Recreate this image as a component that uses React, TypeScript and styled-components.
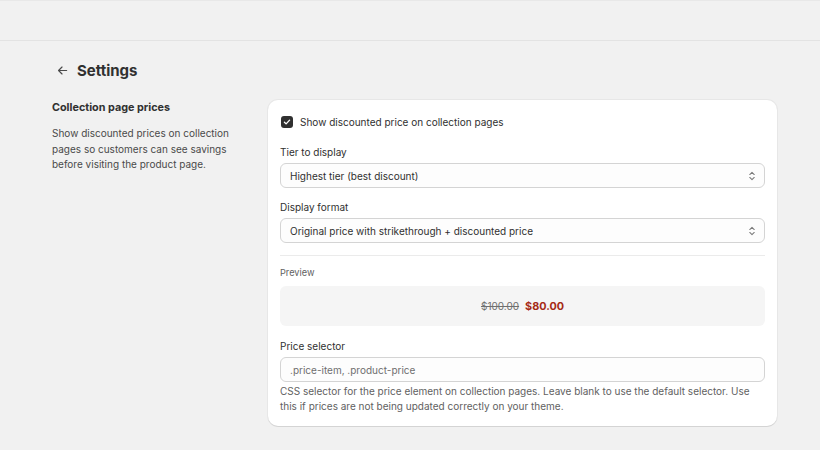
import React, { useState } from "react";
import styled, { createGlobalStyle } from "styled-components";

const GlobalStyle = createGlobalStyle`
  html, body {
    margin: 0;
    padding: 0;
    background: #f1f1f1;
  }
  body {
    font-family: Inter, "Noto Sans", "Liberation Sans", sans-serif;
    color: #303030;
    -webkit-font-smoothing: antialiased;
  }
`;

const ArrowLeft = () => (
  <svg width="11" height="11" viewBox="0 0 12 12" fill="none">
    <path d="M10.5 6H1.8M5.5 2.2L1.7 6l3.8 3.8" stroke="#4a4a4a" strokeWidth="1.3" strokeLinecap="round" strokeLinejoin="round" />
  </svg>
);

const Chevrons = () => (
  <svg width="8" height="12" viewBox="0 0 10 14" fill="none">
    <path d="M2.2 5.2L5 2.4l2.8 2.8M2.2 8.8L5 11.6l2.8-2.8" stroke="#7a7a7a" strokeWidth="1.3" strokeLinecap="round" strokeLinejoin="round" />
  </svg>
);

const Check = () => (
  <svg width="8" height="8" viewBox="0 0 9 9" fill="none">
    <path d="M1.6 4.7l1.9 1.9 3.9-4.2" stroke="#fff" strokeWidth="1.5" strokeLinecap="round" strokeLinejoin="round" />
  </svg>
);

export default function App() {
  const [checked, setChecked] = useState<boolean>(true);

  return (
    <>
      <GlobalStyle />
      <TopBar />
      <Page>
        <PageHeader>
          <BackButton>
            <ArrowLeft />
          </BackButton>
          <PageTitle>Settings</PageTitle>
        </PageHeader>

        <Section>
          <SectionInfo>
            <SectionTitle>Collection page prices</SectionTitle>
            <SectionDescription>
              Show discounted prices on collection pages so customers can see savings before visiting the product page.
            </SectionDescription>
          </SectionInfo>

          <Card>
            <CheckboxRow onClick={() => setChecked(!checked)}>
              <CheckboxBox $checked={checked}>{checked && <Check />}</CheckboxBox>
              <span>Show discounted price on collection pages</span>
            </CheckboxRow>

            <Field>
              <FieldLabel>Tier to display</FieldLabel>
              <SelectBox>
                <span>Highest tier (best discount)</span>
                <Chevrons />
              </SelectBox>
            </Field>

            <Field $gap={11}>
              <FieldLabel>Display format</FieldLabel>
              <SelectBox>
                <span>Original price with strikethrough + discounted price</span>
                <Chevrons />
              </SelectBox>
            </Field>

            <Divider />

            <PreviewLabel>Preview</PreviewLabel>
            <PreviewBox>
              <OldPrice>$100.00</OldPrice>
              <NewPrice>$80.00</NewPrice>
            </PreviewBox>

            <Field>
              <FieldLabel>Price selector</FieldLabel>
              <TextInput placeholder=".price-item, .product-price" />
              <HelpText>
                CSS selector for the price element on collection pages. Leave blank to use the default selector. Use this if prices are not being updated correctly on your theme.
              </HelpText>
            </Field>
          </Card>
        </Section>
      </Page>
    </>
  );
}

const TopBar = styled.div`
  height: 39px;
  border-top: 1px solid #e8e8e8;
  border-bottom: 1px solid #e3e3e3;
  background: #f1f1f1;
`;

const Page = styled.div`
  padding: 15px 43px 24px 52px;
`;

const PageHeader = styled.div`
  display: flex;
  align-items: center;
  gap: 5px;
  height: 28px;
`;

const BackButton = styled.button`
  display: flex;
  align-items: center;
  justify-content: center;
  width: 20px;
  height: 20px;
  padding: 0;
  border: none;
  background: transparent;
  cursor: pointer;
`;

const PageTitle = styled.h1`
  margin: 0;
  font-size: 15px;
  font-weight: 700;
  color: #303030;
`;

const Section = styled.div`
  display: grid;
  grid-template-columns: 200px 1fr;
  gap: 16px;
  margin-top: 16px;
`;

const SectionInfo = styled.div`
  padding-top: 2px;
`;

const SectionTitle = styled.h2`
  margin: 0;
  font-size: 10.8px;
  line-height: 12px;
  font-weight: 650;
  color: #303030;
`;

const SectionDescription = styled.p`
  margin: 12px 0 0;
  font-size: 10px;
  line-height: 15.5px;
  color: #4a4a4a;
  padding-right: 20px;
`;

const Card = styled.div`
  background: #fff;
  border-radius: 10px;
  padding: 12px 12px 12px;
  box-shadow: 0 1px 0 0 #d4d4d4, 0 0 0 1px rgba(0, 0, 0, 0.04);
  display: flex;
  flex-direction: column;
`;

const CheckboxRow = styled.label`
  display: flex;
  align-items: center;
  gap: 7px;
  height: 20px;
  font-size: 10px;
  color: #303030;
  cursor: pointer;
`;

const CheckboxBox = styled.span<{ $checked: boolean }>`
  display: flex;
  align-items: center;
  justify-content: center;
  width: 12px;
  height: 12px;
  margin-left: 1px;
  border-radius: 3px;
  box-sizing: border-box;
  background: ${(p) => (p.$checked ? "#303030" : "#fff")};
  border: ${(p) => (p.$checked ? "none" : "1px solid #8a8a8a")};
`;

const Field = styled.div<{ $gap?: number }>`
  display: flex;
  flex-direction: column;
  margin-top: ${(p) => p.$gap ?? 12}px;
`;

const FieldLabel = styled.div`
  font-size: 10px;
  line-height: 16px;
  color: #303030;
  margin-bottom: 3px;
`;

const SelectBox = styled.div`
  display: flex;
  align-items: center;
  justify-content: space-between;
  box-sizing: border-box;
  height: 25px;
  padding: 0 8px 0 9px;
  border: 1px solid #d4d4d4;
  border-radius: 6px;
  background: #fdfdfd;
  font-size: 10px;
  color: #303030;
`;

const Divider = styled.hr`
  margin: 12px 0 0;
  border: none;
  border-top: 1px solid #ebebeb;
`;

const PreviewLabel = styled.div`
  margin-top: 10px;
  font-size: 9.2px;
  line-height: 14px;
  color: #616161;
`;

const PreviewBox = styled.div`
  display: flex;
  align-items: center;
  justify-content: center;
  gap: 6px;
  height: 40px;
  margin-top: 6px;
  border-radius: 6px;
  background: #f5f5f5;
`;

const OldPrice = styled.span`
  font-size: 10px;
  color: #6f6f6f;
  text-decoration: line-through;
`;

const NewPrice = styled.span`
  font-size: 10.8px;
  font-weight: 650;
  color: #a52a14;
`;

const TextInput = styled.input`
  box-sizing: border-box;
  height: 25px;
  padding: 0 9px;
  border: 1px solid #d4d4d4;
  border-radius: 6px;
  background: #fdfdfd;
  font-family: inherit;
  font-size: 10px;
  color: #303030;
  outline: none;
  &::placeholder {
    color: #6f6f6f;
  }
`;

const HelpText = styled.div`
  margin-top: 2px;
  font-size: 10px;
  line-height: 15px;
  color: #616161;
`;
